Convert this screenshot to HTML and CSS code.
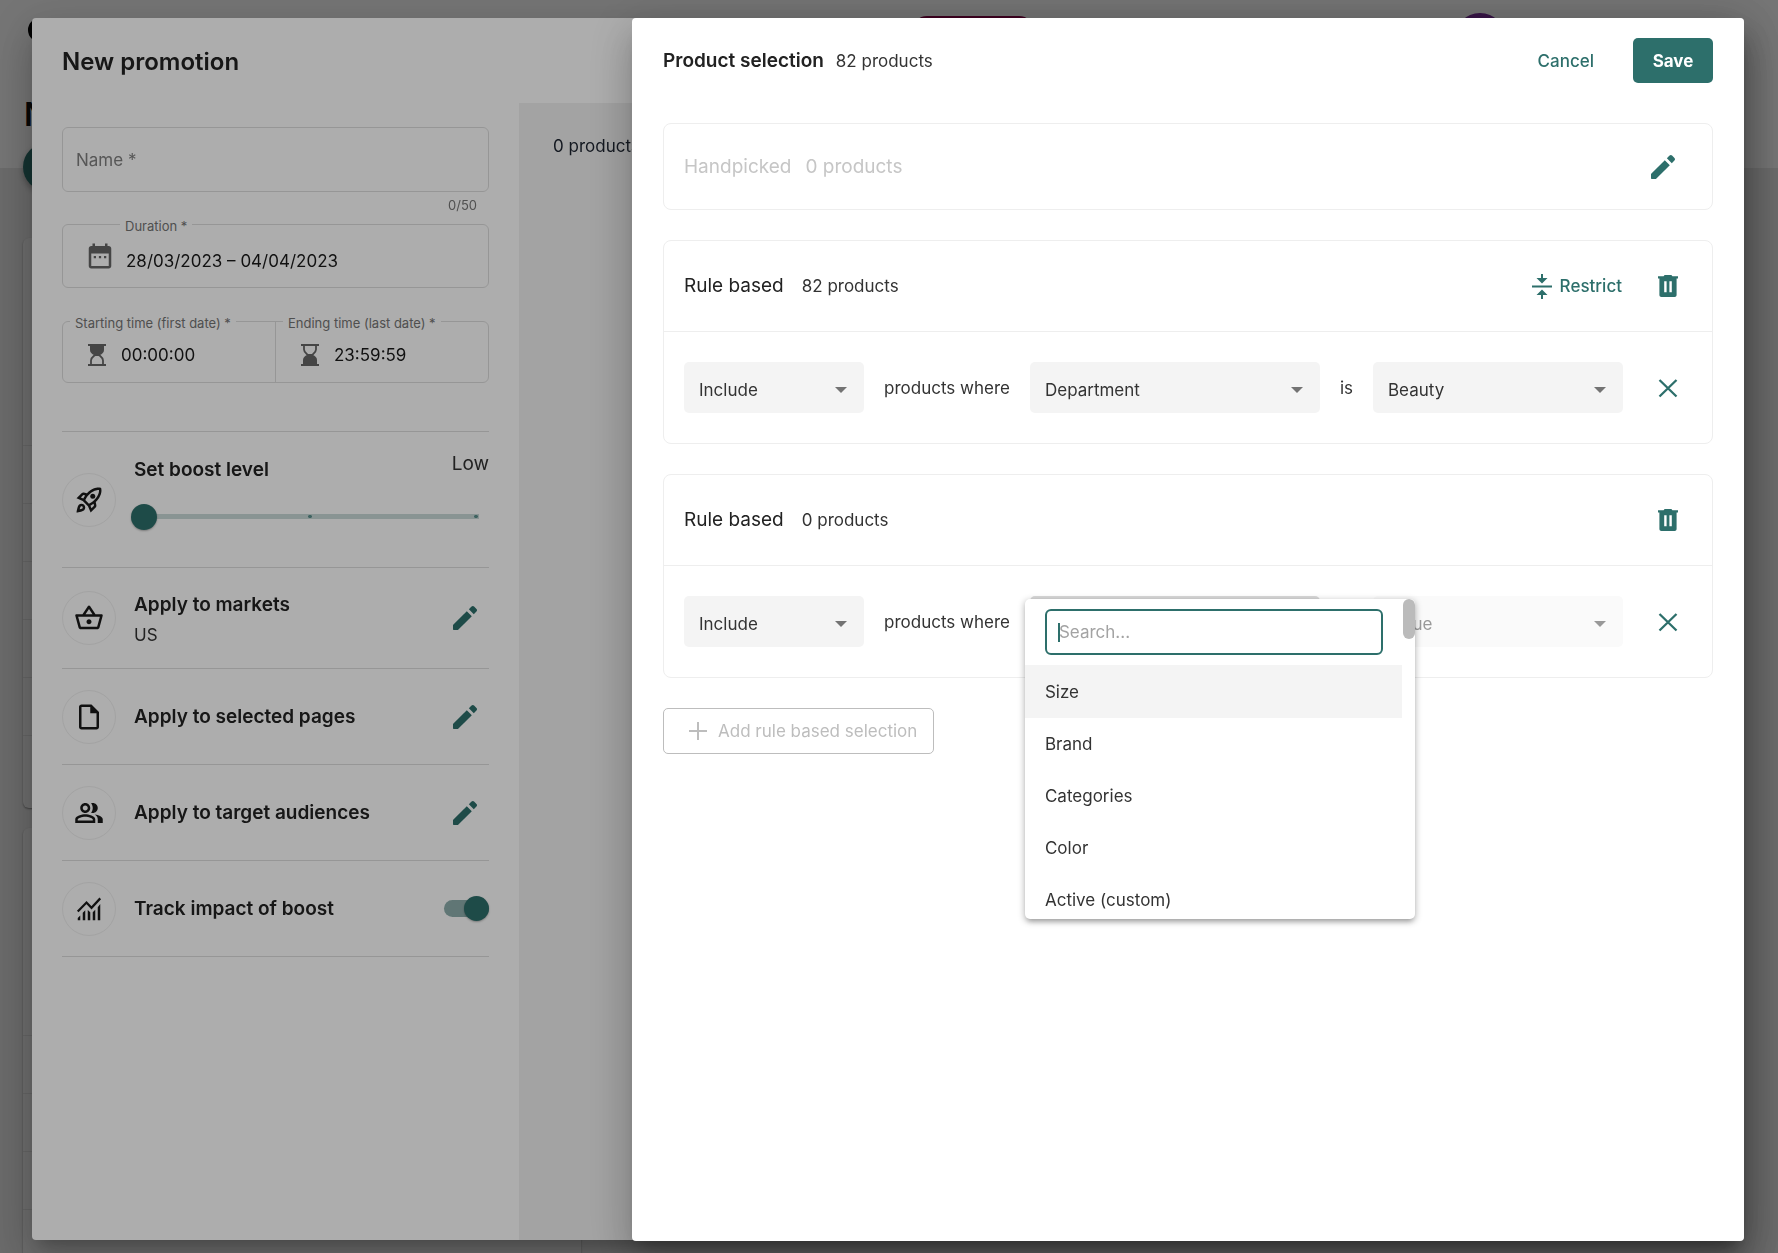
FILE: index.html
```html
<!DOCTYPE html>
<html lang="en">
<head>
<meta charset="utf-8">
<title>New promotion</title>
<link rel="stylesheet" href="styles.css">
</head>
<body>
<svg class="sprite" aria-hidden="true">
  <symbol id="pencil" viewBox="0 0 24 24"><path d="M3 17.46v3.04c0 .28.22.5.5.5h3.04c.13 0 .26-.05.35-.15L17.1 10.65l-3.75-3.75L3.15 17.1c-.1.1-.15.22-.15.36zM20.4 7.3c.8-.8.8-1.5.2-2.1l-1.8-1.8c-.6-.6-1.3-.6-2.1.2l-1.8 1.8 3.7 3.7z"/></symbol>
  <symbol id="trash" viewBox="0 0 24 24"><path fill-rule="evenodd" d="M2 2.3h5.6l1-1.3h6.8l1 1.3H22v2.2h-1.4V21c0 1.2-.8 2-2 2H5.400c-1.200 0-2-.8-2-2V4.500H2zM8.200 7.200v11h2.400v-11zM13.400 7.200v11h2.400v-11z"/></symbol>
  <symbol id="cross" viewBox="0 0 24 24"><path d="M3.500 4l17 16.500M20.500 4l-17 16.500" fill="none" stroke="currentColor" stroke-width="2.300"/></symbol>
</svg>

<div class="page" aria-hidden="true">
  <header class="page-head">
    <div class="page-bar"><span class="page-logo"></span><span class="page-pill"></span><span class="page-avatar"></span></div>
    <p class="page-title">N</p>
  </header>
  <span class="page-fab"></span>
  <div class="page-card page-card-first"><i></i><i></i><i></i><i></i><i></i><i></i></div>
  <div class="page-card page-card-second"><i></i><i></i><i></i><i></i></div>
</div>

<div class="backdrop">
  <section class="dialog promo" aria-labelledby="promo-title">
    <header class="promo-head"><h1 id="promo-title">New promotion</h1></header>
    <div class="promo-main">
      <form class="promo-form">
        <div class="field field-name"><input type="text" aria-label="Name" placeholder="Name *"></div>
        <p class="counter">0/50</p>
        <div class="field field-duration">
          <label class="float-label" for="duration">Duration *</label>
          <svg class="icon-30" viewBox="0 0 24 24"><path d="M7 12h1.800v1.800H7zM11.100 12h1.800v1.800h-1.800zM15.200 12H17v1.800h-1.800zM21 6v14c0 1.100-.9 2-2 2H5c-1.110 0-2-.9-2-2V6c0-1.100.880-2 2-2h1V2h2v2h8V2h2v2h1c1.100 0 2 .9 2 2zM19 20V10H5v10z" fill-rule="evenodd"/></svg>
          <input id="duration" type="text" value="28/03/2023 – 04/04/2023">
        </div>
        <div class="times">
          <div class="time">
            <label class="float-label" for="start">Starting time (first date) *</label>
            <svg class="icon-glass" viewBox="0 0 18 22"><path d="M0 0h18v2H0zM0 20h18v2H0z"/><path d="M2 1h14v5c0 2.500-2 4-4 5H6C4 10 2 8.500 2 6z"/><path d="M3 21v-4.500c0-3 2.500-4 4-5.500h4c1.500 1.500 4 2.500 4 5.500V21" fill="none" stroke="currentColor" stroke-width="1.800"/></svg>
            <input id="start" type="text" value="00:00:00">
          </div>
          <div class="time">
            <label class="float-label" for="end">Ending time (last date) *</label>
            <svg class="icon-glass" viewBox="0 0 18 22"><path d="M0 0h18v2H0zM0 20h18v2H0z"/><path d="M2 21h14v-5c0-2.500-2-4-4-5H6c-2 1-4 2.500-4 5z"/><path d="M3 1v4.500c0 3 2.500 4 4 5.500h4c1.500-1.500 4-2.500 4-5.500V1" fill="none" stroke="currentColor" stroke-width="1.800"/></svg>
            <input id="end" type="text" value="23:59:59">
          </div>
        </div>

        <div class="option option-boost">
          <span class="disc"><svg class="icon-30" viewBox="0 0 24 24"><path fill-rule="evenodd" d="M6 15c-.83 0-1.580.340-2.120.880C2.700 17.060 2 22 2 22s4.940-.7 6.120-1.880c.540-.540.880-1.290.880-2.120 0-1.660-1.340-3-3-3zm.710 3.710c-.280.280-2.170.760-2.170.760s.470-1.880.760-2.170c.170-.190.420-.3.7-.3.550 0 1 .450 1 1 0 .280-.110.530-.290.710zM17.420 13.650c6.360-6.360 4.240-11.310 4.240-11.310S16.710.220 10.350 6.580l-2.490-.5c-.650-.130-1.330.080-1.810.550L2 10.690l5 2.140L11.170 17l2.140 5 4.050-4.050c.470-.470.680-1.150.550-1.810zM7.410 10.830l-1.910-.820 1.970-1.970 1.440.290c-.570.830-1.080 1.700-1.500 2.500zM13.990 18.500l-.820-1.910c.8-.420 1.670-.930 2.490-1.500l.290 1.440zM16 12.240c-1.320 1.320-3.380 2.400-4.040 2.730l-2.930-2.930c.320-.650 1.400-2.710 2.730-4.040 4.680-4.680 8.230-3.990 8.230-3.990s.690 3.550-3.990 8.230z"/><circle cx="15" cy="9" r="2"/></svg></span>
          <div class="boost">
            <div class="boost-top"><label for="boost">Set boost level</label><output for="boost">Low</output></div>
            <input class="slider" id="boost" type="range" min="0" max="2" value="0">
          </div>
        </div>
        <div class="option option-markets">
          <span class="disc"><svg class="icon-30" viewBox="0 0 24 24"><path d="M22 9h-4.790l-4.380-6.560c-.190-.280-.510-.420-.830-.420s-.640.140-.830.430L6.790 9H2c-.550 0-1 .450-1 1 0 .090.010.180.040.270l2.540 9.270c.230.840 1 1.460 1.920 1.460h13c.920 0 1.690-.620 1.930-1.460l2.540-9.270L23 10c0-.550-.450-1-1-1zM12 4.800L14.800 9H9.200L12 4.800zM18.500 19l-12.990.010L3.310 11H20.700l-2.200 8zM12 13c-1.100 0-2 .9-2 2s.9 2 2 2 2-.9 2-2-.9-2-2-2z"/></svg></span>
          <div class="option-text"><h2>Apply to markets</h2><p>US</p></div>
          <button class="icon-button" type="button" aria-label="Edit markets"><svg class="icon-32"><use href="#pencil"/></svg></button>
        </div>
        <div class="option">
          <span class="disc"><svg class="icon-30" viewBox="0 0 24 24"><path d="M14 2H6c-1.100 0-1.990.9-1.990 2L4 20c0 1.100.890 2 1.990 2H18c1.100 0 2-.9 2-2V8l-6-6zM6 20V4h7v5h5v11H6z"/></svg></span>
          <div class="option-text"><h2>Apply to selected pages</h2></div>
          <button class="icon-button" type="button" aria-label="Edit pages"><svg class="icon-32"><use href="#pencil"/></svg></button>
        </div>
        <div class="option">
          <span class="disc"><svg class="icon-30" viewBox="0 0 24 24"><path d="M16.670 13.130C18.040 14.060 19 15.320 19 17v3h4v-3c0-2.180-3.570-3.470-6.330-3.870zM15 12c2.210 0 4-1.790 4-4s-1.790-4-4-4c-.470 0-.910.1-1.330.240C14.500 5.270 15 6.580 15 8s-.5 2.730-1.330 3.760c.420.140.860.240 1.330.240zM9 12c2.210 0 4-1.790 4-4s-1.790-4-4-4-4 1.790-4 4 1.790 4 4 4zm0-6c1.100 0 2 .9 2 2s-.9 2-2 2-2-.9-2-2 .9-2 2-2zm0 7c-2.670 0-8 1.340-8 4v3h16v-3c0-2.660-5.330-4-8-4zm6 5H3v-.990C3.200 16.290 6.300 15 9 15s5.800 1.290 6 2v1z"/></svg></span>
          <div class="option-text"><h2>Apply to target audiences</h2></div>
          <button class="icon-button" type="button" aria-label="Edit audiences"><svg class="icon-32"><use href="#pencil"/></svg></button>
        </div>
        <div class="option option-last">
          <span class="disc"><svg class="icon-30" viewBox="0 0 24 24"><path d="M3 14l7-7.200 4 4.200 7-7.500" fill="none" stroke="currentColor" stroke-width="1.800"/><path d="M3 19.200l2-2V21H3zM7 15l2-2v8H7zM11 12.800l2 1.800V21h-2zM15 14.500l2-2V21h-2zM19 10.500l2-2.500v13h-2z"/></svg></span>
          <label class="option-text option-label" for="track">Track impact of boost</label>
          <input class="switch" id="track" type="checkbox" role="switch" checked>
        </div>
      </form>
      <aside class="promo-preview">0 products</aside>
    </div>
  </section>
</div>

<div class="backdrop backdrop-top">
  <section class="dialog selection" aria-labelledby="selection-title">
    <header class="selection-head">
      <h1 id="selection-title">Product selection</h1>
      <span class="count">82 products</span>
      <button class="text-button" type="button">Cancel</button>
      <button class="save" type="button">Save</button>
    </header>
    <div class="card card-muted">
      <div class="card-head">
        <h2>Handpicked</h2><span>0 products</span>
        <button class="icon-button" type="button" aria-label="Edit handpicked"><svg class="icon-32"><use href="#pencil"/></svg></button>
      </div>
    </div>
    <div class="card">
      <div class="card-head">
        <h2>Rule based</h2><span class="count">82 products</span>
        <button class="restrict" type="button"><svg class="icon-restrict" viewBox="0 0 20 25"><path d="M0 11.600h20v2H0zM9 0h2v4h4.500L10 9.500 4.500 4H9zM9 25h2v-4h4.500L10 15.500 4.500 21H9z"/></svg>Restrict</button>
        <button class="icon-button" type="button" aria-label="Delete rule"><svg class="icon-24"><use href="#trash"/></svg></button>
      </div>
      <div class="rule">
        <div class="select select-mode"><select aria-label="Mode"><option>Include</option></select></div>
        <span>products where</span>
        <div class="select select-attribute"><select aria-label="Attribute"><option>Department</option></select></div>
        <span>is</span>
        <div class="select select-value"><select aria-label="Value"><option>Beauty</option></select></div>
        <button class="icon-button remove" type="button" aria-label="Remove condition"><svg class="icon-24"><use href="#cross"/></svg></button>
      </div>
    </div>
    <div class="card">
      <div class="card-head">
        <h2>Rule based</h2><span class="count">0 products</span>
        <button class="icon-button" type="button" aria-label="Delete rule"><svg class="icon-24"><use href="#trash"/></svg></button>
      </div>
      <div class="rule">
        <div class="select select-mode"><select aria-label="Mode"><option>Include</option></select></div>
        <span>products where</span>
        <div class="select select-attribute select-open">
          <select aria-label="Attribute"><option></option></select>
          <div class="menu">
            <div class="search"><input type="text" aria-label="Search" placeholder="Search..."><i class="caret"></i></div>
            <ul>
              <li class="active">Size</li>
              <li>Brand</li>
              <li>Categories</li>
              <li>Color</li>
              <li>Active (custom)</li>
            </ul>
            <i class="scroll-thumb"></i>
          </div>
        </div>
        <span>is</span>
        <div class="select select-value select-disabled"><select aria-label="Value" disabled><option>Value</option></select></div>
        <button class="icon-button remove" type="button" aria-label="Remove condition"><svg class="icon-24"><use href="#cross"/></svg></button>
      </div>
    </div>
    <button class="add" type="button" disabled><svg class="icon-plus" viewBox="0 0 18 18"><path d="M0 8h8V0h2v8h8v2h-8v8H8v-8H0z"/></svg>Add rule based selection</button>
  </section>
</div>
</body>
</html>
```
FILE: styles.css
```css
:root {
  --teal: #2d6f6b;
  --ink: #222;
  --line: #dedede;
  --soft-line: #eee;
  --fill: #f4f4f4;
}
* { box-sizing: border-box; }
body {
  margin: 0;
  height: 100vh;
  overflow: hidden;
  font: 400 17px/24px Inter, "Open Sans", sans-serif;
  color: #333;
}
h1, h2, p, ul { margin: 0; padding: 0; }
input, select, button { font: inherit; color: inherit; margin: 0; }
input { background: none; border: 0; outline: 0; min-width: 0; }
button { background: none; border: 0; padding: 0; color: var(--teal); }
svg { display: block; fill: currentColor; flex: none; }
.sprite { position: absolute; width: 0; height: 0; }
.icon-24 { width: 24px; height: 24px; }
.icon-30 { width: 30px; height: 30px; }
.icon-32 { width: 32px; height: 32px; }
.icon-glass { width: 18px; height: 22px; }
.icon-plus { width: 18px; height: 18px; }
.icon-restrict { width: 20px; height: 25px; }

/* page behind the dialogs */
.page { height: 100%; overflow: hidden; background: #e9e9e9; display: flow-root; }
.page-head { height: 168px; background: #fff; padding: 0 24px; }
.page-bar { display: flex; height: 96px; align-items: flex-start; }
.page-logo { width: 24px; height: 24px; margin: 18px 0 0 4px; border: 5px solid #000; border-radius: 50%; }
.page-pill { width: 122px; height: 30px; margin: 16px 0 0 860px; border-radius: 15px; background: #8b0046; }
.page-avatar { width: 52px; height: 52px; margin: 13px 0 0 420px; border-radius: 50%; background: #7b2d9b; }
.page-title { font-size: 32px; line-height: 38px; font-weight: 600; color: #111; }
.page-fab { display: block; width: 48px; height: 48px; margin: -25px 0 47px 23px; border-radius: 50%; background: var(--teal); box-shadow: 0 3px 6px rgba(0, 0, 0, .3); }
.page-card { width: 558px; margin: 0 0 20px 23px; border-radius: 6px; background: #f1f1f1; box-shadow: 0 1px 2px rgba(0, 0, 0, .4); }
.page-card i { display: block; height: 58px; border-bottom: 1px solid #ddd; }
.page-card-first { height: 570px; padding-top: 150px; }
.page-card-second { height: 600px; padding-top: 150px; }

/* dialogs */
.backdrop {
  position: fixed;
  inset: 0;
  display: flex;
  padding: 18px 34px 13px 32px;
  background: rgba(0, 0, 0, .32);
}
.backdrop-top { padding-bottom: 12px; justify-content: flex-end; }
.dialog {
  background: #fff;
  border-radius: 4px;
  box-shadow: 0 11px 15px -7px rgba(0, 0, 0, .2), 0 24px 38px 3px rgba(0, 0, 0, .14), 0 9px 46px 8px rgba(0, 0, 0, .12);
}

/* promotion form */
.promo { flex: 1; display: flex; flex-direction: column; overflow: hidden; }
.promo-head { height: 85px; padding: 29px 30px; }
.promo-head h1 { font-size: 24px; line-height: 30px; font-weight: 600; color: var(--ink); }
.promo-main { flex: 1; display: flex; }
.promo-form { flex: 0 0 487px; min-width: 0; padding: 24px 30px; }
.promo-preview { flex: 1; padding: 31px 34px; background: #f0f0f0; color: #1d2430; }
.field, .times { position: relative; display: flex; border: 1px solid var(--line); border-radius: 6px; }
.field input, .time input { flex: 1; width: 0; }
.field-name { height: 65px; }
.field-name input { padding: 0 13px; }
.field-name input::placeholder { color: #808080; opacity: 1; }
.counter { padding: 5px 12px 11px; font-size: 13px; line-height: 16px; text-align: right; color: #777; }
.field-duration { height: 64px; align-items: center; padding-left: 22px; gap: 11px; }
.field-duration .float-label { left: 57px; }
.field-duration svg, .time svg { color: #666; }
.field-duration input { height: 62px; padding: 10px 0 0; color: #1a1a1a; }
.float-label { position: absolute; top: -7px; left: 7px; padding: 0 5px; background: #fff; font-size: 13px; line-height: 16px; color: #757575; }
.times { height: 62px; margin: 33px 0 48px; }
.time { position: relative; flex: 1; min-width: 0; display: flex; align-items: center; gap: 15px; padding: 6px 0 0 25px; }
.time + .time { border-left: 1px solid var(--line); }
.time input { padding: 0; color: #1a1a1a; }

.option { display: flex; align-items: center; gap: 18px; height: 96px; border-top: 1px solid var(--line); }
.option-boost { height: 136px; }
.option-markets { height: 101px; }
.option-markets .option-text { padding-top: 4px; }
.option-last { height: 97px; border-bottom: 1px solid var(--line); }
.option .icon-button { margin-right: 8px; }
.disc { flex: none; display: flex; align-items: center; justify-content: center; width: 54px; height: 54px; border: 1px solid #f0f0f0; border-radius: 50%; color: #1a1a1a; }
.option-text { flex: 1; display: grid; gap: 6px; }
.option-text h2, .option-label, .boost label { font-size: 19px; line-height: 24px; font-weight: 600; color: var(--ink); }
.boost { flex: 1; display: grid; gap: 22px; padding-bottom: 18px; }
.boost-top { display: flex; justify-content: space-between; height: 30px; font-size: 19px; }
.boost label { align-self: flex-end; }
.slider {
  appearance: none;
  display: block;
  width: calc(100% + 3px);
  height: 26px;
  margin-left: -3px;
}
.slider::-webkit-slider-runnable-track {
  height: 5px;
  background:
    radial-gradient(circle 2px at calc(100% - 13px) 50%, #5f9390 80%, transparent),
    radial-gradient(circle 2px at 50% 50%, #5f9390 80%, transparent),
    linear-gradient(#cbdad9, #cbdad9) 10px 0 / calc(100% - 20px) 5px no-repeat;
}
.slider::-webkit-slider-thumb {
  appearance: none;
  width: 26px;
  height: 26px;
  margin-top: -10px;
  border-radius: 50%;
  background: var(--teal);
  box-shadow: 0 1px 2px rgba(0, 0, 0, .3);
}
.switch {
  appearance: none;
  display: flex;
  align-items: center;
  justify-content: flex-end;
  width: 45px;
  height: 17px;
  border-radius: 9px;
  background: #8eafad;
}
.switch::before {
  content: "";
  flex: none;
  width: 25px;
  height: 25px;
  border-radius: 50%;
  background: var(--teal);
  box-shadow: 0 1px 2px rgba(0, 0, 0, .3);
}

/* product selection */
.selection { width: 1112px; padding: 20px 31px; }
.selection-head { display: flex; align-items: center; height: 45px; margin-bottom: 40px; }
.selection-head h1 { font-size: 19px; line-height: 24px; font-weight: 600; color: var(--ink); margin-right: 12px; }
.text-button { margin-left: auto; margin-right: 39px; font-weight: 500; }
.save { width: 80px; height: 45px; border-radius: 5px; background: var(--teal); color: #fff; font-weight: 700; }
.card { margin-bottom: 30px; border: 1px solid var(--soft-line); border-radius: 8px; }
.card-head { display: flex; align-items: center; height: 90px; padding: 0 28px 0 20px; }
.card-head h2 { font-size: 19px; line-height: 24px; font-weight: 400; color: var(--ink); margin-right: 18px; }
.card-head .icon-button { margin-left: auto; }
.card-muted .card-head { height: 85px; padding-right: 33px; font-size: 19px; color: #c6c6c6; }
.card-muted h2 { color: inherit; margin-right: 14px; }
.icon-button { display: flex; align-items: center; justify-content: center; width: 32px; height: 32px; }
.restrict { display: flex; align-items: center; gap: 8px; margin-left: auto; font-weight: 500; }
.card-head .restrict + .icon-button { margin-left: 30px; }
.rule { display: flex; align-items: center; gap: 20px; padding: 30px 28px 30px 20px; border-top: 1px solid var(--soft-line); }
.rule .remove { margin-left: 9px; }
.select { position: relative; height: 51px; }
.select-mode { width: 180px; }
.select-attribute { flex: 1; }
.select-value { width: 250px; }
.select select {
  appearance: none;
  display: block;
  width: 100%;
  height: 100%;
  padding: 4px 40px 0 15px;
  border: 0;
  border-radius: 5px;
  background: var(--fill);
}
.select::after {
  content: "";
  position: absolute;
  top: 25px;
  right: 17px;
  border: 6px solid transparent;
  border-top-color: #737373;
  border-bottom: 0;
}
.select-disabled select { background: #fafafa; color: #999; opacity: 1; }
.select-disabled::after { border-top-color: #999; }
.select-open { z-index: 1; }
.select-open select { background: #d9d9d9; }
.select-open::after { content: none; }

.menu {
  position: absolute;
  top: 3px;
  left: -5px;
  width: 390px;
  height: 320px;
  overflow: hidden;
  border-radius: 5px;
  background: #fff;
  box-shadow: 0 5px 5px -3px rgba(0, 0, 0, .2), 0 2px 6px 1px rgba(0, 0, 0, .25);
}
.menu ul { list-style: none; margin-right: 13px; }
.menu li { display: flex; align-items: center; height: 52px; padding: 0 20px; }
.menu .active { height: 53px; background: var(--fill); }
.search { position: relative; margin: 10px 32px 10px 20px; }
.search input { display: block; width: 100%; height: 46px; padding: 0 12px; border: 2px solid var(--teal); border-radius: 6px; }
.search input::placeholder { color: #a3a3a3; opacity: 1; }
.caret { position: absolute; top: 14px; left: 13px; width: 2px; height: 19px; background: var(--teal); }
.scroll-thumb { position: absolute; top: 0; right: 0; width: 12px; height: 40px; border-radius: 6px; background: #bbb; }

.add {
  display: flex;
  align-items: center;
  gap: 11px;
  height: 46px;
  padding: 0 16px 0 25px;
  border: 1px solid #bdbdbd;
  border-radius: 5px;
  color: #bdbdbd;
}
```
